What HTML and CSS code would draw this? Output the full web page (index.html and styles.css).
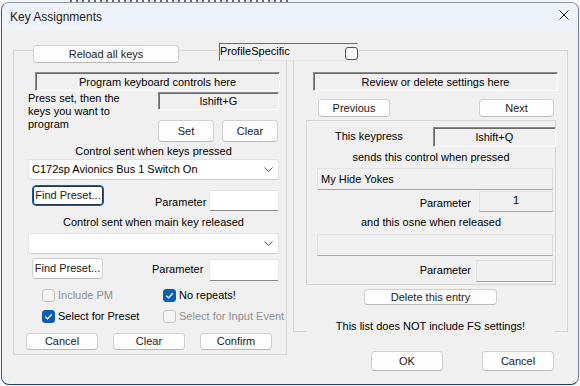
FILE: index.html
```html
<!DOCTYPE html>
<html>
<head>
<meta charset="utf-8">
<link rel="stylesheet" href="styles.css">
</head>
<body>
<div class="desk"></div>
<div class="window">
  <div class="titlebar">
    <span class="title">Key Assignments</span>
    <svg class="close" width="10" height="10" viewBox="0 0 10 10"><path d="M0.5 0.5 L9.5 9.5 M9.5 0.5 L0.5 9.5" stroke="#1a1a1a" stroke-width="1" fill="none"/></svg>
  </div>
  <div class="client">
    <div class="toprow">
      <div class="btn reload">Reload all keys</div>
      <div class="profile"><span class="ptext">ProfileSpecific</span><span class="cb cb-dark"></span></div>
    </div>
    <div class="groups">
      <div class="group gleft">
        <div class="sunken banner bl">Program keyboard controls here</div>
        <div class="pressrow">
          <div class="presstext">Press set, then the<br>keys you want to<br>program</div>
          <div class="pressright">
            <div class="sunken keybox">lshift+G</div>
            <div class="setrow">
              <div class="btn setbtn">Set</div>
              <div class="btn setbtn clearbtn">Clear</div>
            </div>
          </div>
        </div>
        <div class="caption c1">Control sent when keys pressed</div>
        <div class="combo c-first"><span class="ctext">C172sp Avionics Bus 1 Switch On</span><svg class="chev" width="9" height="5" viewBox="0 0 9 5"><path d="M0.5 0.5 L4.5 4.5 L8.5 0.5" stroke="#555" stroke-width="1" fill="none"/></svg></div>
        <div class="findrow f1">
          <div class="btn find focus">Find Preset...</div>
          <div class="plabel pl1">Parameter</div>
          <div class="edit e1"></div>
        </div>
        <div class="caption c2">Control sent when main key released</div>
        <div class="combo c-second"><span class="ctext"></span><svg class="chev" width="9" height="5" viewBox="0 0 9 5"><path d="M0.5 0.5 L4.5 4.5 L8.5 0.5" stroke="#555" stroke-width="1" fill="none"/></svg></div>
        <div class="findrow f2">
          <div class="btn find find2">Find Preset...</div>
          <div class="plabel pl2">Parameter</div>
          <div class="edit e2"></div>
        </div>
        <div class="checkrow r1">
          <div class="chk disabled"><span class="cb cb-dis"></span><span>Include PM</span></div>
          <div class="chk"><span class="cb cb-on"><svg width="13" height="13" viewBox="0 0 13 13"><path d="M3.2 6.6 L5.5 8.9 L9.8 4.3" stroke="#fff" stroke-width="1.3" fill="none"/></svg></span><span>No repeats!</span></div>
        </div>
        <div class="checkrow r2">
          <div class="chk"><span class="cb cb-on"><svg width="13" height="13" viewBox="0 0 13 13"><path d="M3.2 6.6 L5.5 8.9 L9.8 4.3" stroke="#fff" stroke-width="1.3" fill="none"/></svg></span><span>Select for Preset</span></div>
          <div class="chk disabled"><span class="cb cb-dis"></span><span>Select for Input Event</span></div>
        </div>
        <div class="btnrow">
          <div class="btn small b-cancel">Cancel</div>
          <div class="btn small b-clear">Clear</div>
          <div class="btn small b-confirm">Confirm</div>
        </div>
      </div>
      <div class="rightcol">
        <div class="group gright">
          <div class="sunken banner br">Review or delete settings here</div>
          <div class="navrow">
            <div class="btn nav prev">Previous</div>
            <div class="btn nav next">Next</div>
          </div>
          <div class="inner">
            <div class="kprow">
              <div class="kptext">This keypress</div>
              <div class="sunken kpbox">lshift+Q</div>
            </div>
            <div class="caption ic1">sends this control when pressed</div>
            <div class="ro wide w1">My Hide Yokes</div>
            <div class="prow p1">
              <div class="plabel">Parameter</div>
              <div class="ro pbox pb1">1</div>
            </div>
            <div class="caption ic2">and this osne when released</div>
            <div class="ro wide w2"></div>
            <div class="prow p2">
              <div class="plabel">Parameter</div>
              <div class="ro pbox pb2"></div>
            </div>
          </div>
          <div class="btn delbtn">Delete this entry</div>
          <div class="note">This list does NOT include FS settings!</div>
        </div>
        <div class="dlgbtns">
          <div class="btn dbtn ok">OK</div>
          <div class="btn dbtn cancel">Cancel</div>
        </div>
      </div>
    </div>
  </div>
</div>
</body>
</html>
```

FILE: styles.css
```css
* { box-sizing: border-box; }
html, body { margin: 0; padding: 0; }
body {
  background: #f7f7f7;
  font-family: "Liberation Sans", Arial, sans-serif;
  font-size: 11px;
  line-height: 13px;
  color: #000;
  width: 580px;
  height: 386px;
  overflow: hidden;
}
.desk {
  height: 2px;
  background: repeating-linear-gradient(90deg, #6a6a6a 0 2px, transparent 2px 6px) 70px 0 / 220px 2px no-repeat;
}
.window {
  margin-left: 1px;
  width: 578px;
  height: 383px;
  border: 1px solid #8f9aa5;
  border-bottom-color: #1f3f66;
  border-left-color: #3d5a7d;
  border-right-color: #6d7f93;
  border-radius: 8px;
  background: #f0f0f0;
  overflow: hidden;
}
.titlebar {
  height: 27px;
  background: #eef3f9;
  display: flex;
  align-items: center;
  padding-left: 8px;
}
.title { font-size: 12px; color: #1a1a1a; margin-top: 1px; }
.close { margin-left: auto; margin-right: 9px; align-self: flex-start; margin-top: 7px; }
.client { padding: 13px 0 0 11px; }

.btn {
  background: #fdfdfd;
  border: 1px solid #d0d0d0;
  border-bottom-color: #b9b9b9;
  border-radius: 4px;
  display: flex;
  align-items: center;
  justify-content: center;
  color: #1b1b1b;
  white-space: nowrap;
}
.toprow {
  display: flex;
  align-items: flex-start;
  position: relative;
  z-index: 1;
}
.reload { margin: 2px 0 0 20px; width: 146px; height: 18px; }
.profile {
  margin-left: 40px;
  width: 139px;
  height: 18px;
  display: flex;
  align-items: flex-start;
  border: 1px solid #e4e4e4;
  border-top-color: #6b6b6b;
  border-left-color: #6b6b6b;
  background: #f0f0f0;
}
.ptext { padding-left: 0; margin-top: 1px; }
.cb {
  width: 13px;
  height: 13px;
  border-radius: 3px;
  border: 1px solid #8a8a8a;
  background: #f8f8f8;
  display: inline-block;
  flex: none;
}
.cb svg { display: block; margin: -1px; }
.cb-dark { margin-left: auto; margin-top: 3px; margin-right: -1px; border-color: #555; background: #f7f7f7; }
.cb-dis { border-color: #c6c6c6; background: #f5f5f5; }
.cb-on { background: #0f5db3; border-color: #0f5db3; }

.groups { display: flex; align-items: flex-start; margin-top: -13px; }
.group { border: 1px solid #d6d6d6; }
.gleft { width: 274px; height: 305px; }
.rightcol { margin-left: 6px; }
.gright { width: 275px; height: 282px; }

.sunken {
  border: 1px solid #fff;
  border-top-color: #8a8a8a;
  border-left-color: #8a8a8a;
  box-shadow: inset 1px 1px 0 #6a6a6a;
  display: flex;
  align-items: center;
  justify-content: center;
  background: #f0f0f0;
}
.banner { width: 245px; height: 19px; padding-top: 1px; }
.bl { margin: 21px 0 0 21px; }
.br { margin: 21px 0 0 19px; }

.pressrow { display: flex; align-items: flex-start; }
.presstext { margin-left: 14px; width: 130px; padding-top: 1px; }
.pressright { width: 121px; }
.keybox { margin-top: 1px; height: 18px; width: 121px; padding-top: 1px; }
.setrow { display: flex; margin-top: 10px; }
.setbtn { width: 56px; height: 22px; }
.clearbtn { margin-left: 8px; }

.caption { text-align: center; }
.c1 { margin: 3px 0 0 14px; width: 251px; }
.c2 { margin: 5px 0 0 14px; width: 251px; }

.combo {
  margin-left: 14px;
  width: 251px;
  height: 21px;
  background: #fff;
  border: 1px solid #e2e2e2;
  border-bottom-color: #cfcfcf;
  border-radius: 3px;
  display: flex;
  align-items: center;
  padding-left: 3px;
}
.c-first { margin-top: 1px; }
.c-second { margin-top: 4px; }
.chev { margin-left: auto; margin-right: 5px; }

.findrow { display: flex; align-items: flex-start; }
.f1 { margin-top: 5px; }
.f2 { margin-top: 4px; }
.find { margin-left: 18px; width: 72px; height: 21px; }
.find2 { width: 71px; }
.focus { border: 1px solid #0a5db4; box-shadow: inset 0 0 0 1px #1f3550; }
.pl1 { margin: 11px 0 0 51px; }
.pl2 { margin: 5px 0 0 49px; }
.edit {
  margin-left: auto;
  margin-right: 7px;
  width: 70px;
  background: #fff;
  border: 1px solid #e6e6e6;
  border-bottom-color: #8a8a8a;
  border-radius: 2px;
}
.e1 { margin-top: 5px; height: 21px; }
.e2 { margin-top: 1px; height: 22px; }

.checkrow { display: flex; height: 13px; }
.r1 { margin-top: 8px; }
.r2 { margin-top: 8px; }
.chk { display: flex; align-items: center; width: 121px; white-space: nowrap; }
.chk:first-child { margin-left: 28px; }
.chk .cb { margin-right: 3px; }
.disabled { color: #8f8f8f; }

.btnrow { display: flex; margin-top: 10px; }
.small { width: 72px; height: 17px; }
.b-cancel { margin-left: 12px; }
.b-clear { margin-left: 15px; }
.b-confirm { margin-left: 15px; }

.navrow { display: flex; margin-top: 8px; }
.nav { height: 18px; }
.prev { margin-left: 24px; width: 72px; }
.next { margin-left: 89px; width: 75px; }

.inner {
  margin: 3px 0 0 12px;
  width: 250px;
  height: 165px;
  border: 1px solid #d6d6d6;
}
.kprow { display: flex; align-items: flex-start; margin-top: 6px; }
.kptext { margin: 3px 0 0 28px; }
.kpbox { margin-left: auto; margin-right: -1px; width: 123px; height: 20px; }
.ic1 { margin-top: 4px; }
.ic2 { margin-top: 4px; }
.ro {
  background: #f0f0f0;
  border: 1px solid #e2e2e2;
  border-bottom-color: #a6a6a6;
  border-right-color: #dadada;
}
.wide { margin-left: 10px; width: 236px; height: 22px; padding: 4px 0 0 3px; }
.w1 { margin-top: 4px; }
.w2 { margin-top: 5px; }
.prow { display: flex; justify-content: flex-end; align-items: flex-start; }
.p1 { margin-top: 1px; }
.p2 { margin-top: 4px; }
.prow .plabel { margin-right: 8px; }
.p1 .plabel { margin-top: 6px; }
.p2 .plabel { margin-top: 4px; margin-right: 5px; }
.pbox { margin-right: 2px; display: flex; justify-content: center; padding-top: 2px; }
.pb1 { width: 74px; height: 21px; }
.pb2 { width: 77px; height: 22px; }

.delbtn { margin: 4px 0 0 70px; width: 133px; height: 16px; }
.note {
  margin: 15px 12px 0;
  height: 13px;
  text-align: center;
  background: #f0f0f0;
}
.dlgbtns { display: flex; margin-top: 19px; }
.dbtn { width: 72px; height: 20px; }
.ok { margin-left: 78px; }
.cancel { margin-left: 39px; }
```
